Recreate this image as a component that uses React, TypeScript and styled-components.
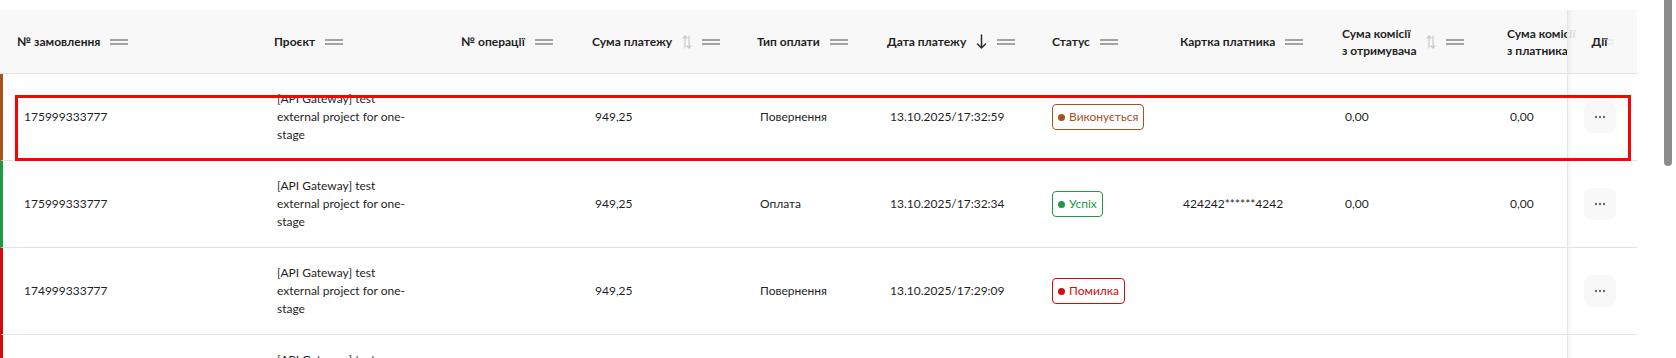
import React from "react";
import styled, { createGlobalStyle } from "styled-components";

type Tone = "progress" | "success" | "error";

interface Column {
  key: string;
  title: string[];
  width?: number;
  sort?: "both" | "down";
}

interface Payment {
  orderId: string;
  project: string;
  operationId: string;
  amount: string;
  type: string;
  date: string;
  status: { label: string; tone: Tone } | null;
  card: string;
  feeReceiver: string;
  feePayer: string;
  accent: Tone;
}

const tones: Record<Tone, string> = {
  progress: "#a5541c",
  success: "#1c9a45",
  error: "#d10a0a",
};

const columns: Column[] = [
  { key: "orderId", title: ["№ замовлення"], width: 258 },
  { key: "project", title: ["Проєкт"], width: 187 },
  { key: "operationId", title: ["№ операції"], width: 131 },
  { key: "amount", title: ["Сума платежу"], width: 165, sort: "both" },
  { key: "type", title: ["Тип оплати"], width: 130 },
  { key: "date", title: ["Дата платежу"], width: 165, sort: "down" },
  { key: "status", title: ["Статус"], width: 128 },
  { key: "card", title: ["Картка платника"], width: 162 },
  { key: "feeReceiver", title: ["Сума комісії", "з отримувача"], width: 165, sort: "both" },
  { key: "feePayer", title: ["Сума комісії", "з платника"], sort: "both" },
];

const PROJECT = "[API Gateway] test external project for one-stage";

const payments: Payment[] = [
  {
    orderId: "175999333777",
    project: PROJECT,
    operationId: "",
    amount: "949,25",
    type: "Повернення",
    date: "13.10.2025/17:32:59",
    status: { label: "Виконується", tone: "progress" },
    card: "",
    feeReceiver: "0,00",
    feePayer: "0,00",
    accent: "progress",
  },
  {
    orderId: "175999333777",
    project: PROJECT,
    operationId: "",
    amount: "949,25",
    type: "Оплата",
    date: "13.10.2025/17:32:34",
    status: { label: "Успіх", tone: "success" },
    card: "424242******4242",
    feeReceiver: "0,00",
    feePayer: "0,00",
    accent: "success",
  },
  {
    orderId: "174999333777",
    project: PROJECT,
    operationId: "",
    amount: "949,25",
    type: "Повернення",
    date: "13.10.2025/17:29:09",
    status: { label: "Помилка", tone: "error" },
    card: "",
    feeReceiver: "",
    feePayer: "",
    accent: "error",
  },
  // only the top of this row is in view
  {
    orderId: "",
    project: PROJECT,
    operationId: "",
    amount: "",
    type: "",
    date: "",
    status: null,
    card: "",
    feeReceiver: "",
    feePayer: "",
    accent: "error",
  },
];

const SortBoth = () => (
  <svg width="10" height="14" viewBox="0 0 10 14" fill="none" stroke="#c9c9c9" strokeWidth="1.2" strokeLinecap="round" strokeLinejoin="round">
    <path d="M3 13V1M1 3l2-2 2 2" />
    <path d="M7 1v12M5 11l2 2 2-2" />
  </svg>
);

const SortDown = () => (
  <svg width="11" height="15" viewBox="0 0 11 15" fill="none" stroke="#2a2a2a" strokeWidth="1.5" strokeLinecap="round" strokeLinejoin="round">
    <path d="M5.5 1v13M1.5 10l4 4 4-4" />
  </svg>
);

const DotsIcon = () => (
  <svg width="12" height="4" viewBox="0 0 12 4" fill="#6b6b6b">
    <circle cx="2" cy="2" r="1.2" />
    <circle cx="6" cy="2" r="1.2" />
    <circle cx="10" cy="2" r="1.2" />
  </svg>
);

const cellValue = (p: Payment, key: string) => {
  switch (key) {
    case "project":
      return <ProjectText>{p.project}</ProjectText>;
    case "status":
      if (!p.status) return null;
      return (
        <Badge $color={tones[p.status.tone]}>
          <BadgeDot $color={tones[p.status.tone]} />
          {p.status.label}
        </Badge>
      );
    default:
      return (p as any)[key];
  }
};

export default function App() {
  return (
    <>
      <GlobalStyle />
      <Page>
        <TableWrap>
          <HeaderRow>
            {columns.map((c, i) => (
              <HeadCell key={c.key} $width={c.width} $first={i === 0}>
                <HeadTitle>
                  {c.title.map((line) => (
                    <span key={line}>{line}</span>
                  ))}
                </HeadTitle>
                {c.sort === "both" && <SortBoth />}
                {c.sort === "down" && <SortDown />}
                <Handle />
              </HeadCell>
            ))}
            <StickyHead>
              <HeadTitle>
                <span>Дії</span>
              </HeadTitle>
            </StickyHead>
          </HeaderRow>

          {payments.map((p, idx) => (
            <Row key={idx} $accent={tones[p.accent]}>
              {columns.map((c, i) => (
                <Cell key={c.key} $width={c.width} $first={i === 0} $status={c.key === "status"}>
                  {cellValue(p, c.key)}
                </Cell>
              ))}
              <StickyCell>
                <ActionButton>
                  <DotsIcon />
                </ActionButton>
              </StickyCell>
            </Row>
          ))}
        </TableWrap>

        <ScrollTrack>
          <ScrollThumb />
        </ScrollTrack>

        {/* annotation frame around the first row */}
        <Highlight />
      </Page>
    </>
  );
}

const GlobalStyle = createGlobalStyle`
  body {
    margin: 0;
    background: #ffffff;
    font-family: Lato, "Liberation Sans", sans-serif;
    color: #1f1f1f;
  }
`;

const Page = styled.div`
  position: relative;
  display: flex;
  width: 1676px;
  height: 358px;
  overflow: hidden;
`;

const TableWrap = styled.div`
  width: 1637px;
  padding-top: 10px;
  display: flex;
  flex-direction: column;
  flex-shrink: 0;
`;

const HeaderRow = styled.div`
  display: flex;
  height: 64px;
  box-sizing: border-box;
  background: #f8f8f8;
  border-bottom: 1px solid #e2e2e2;
  flex-shrink: 0;
`;

const HeadCell = styled.div<{ $width?: number; $first?: boolean }>`
  display: flex;
  align-items: center;
  gap: 10px;
  box-sizing: border-box;
  padding-left: ${({ $first }) => ($first ? 17 : 16)}px;
  ${({ $width }) => ($width ? `width: ${$width}px; flex-shrink: 0;` : `flex: 1; min-width: 0;`)}
  white-space: nowrap;
`;

const HeadTitle = styled.div`
  display: flex;
  flex-direction: column;
  font-size: 12px;
  line-height: 17px;
  font-weight: 700;
  color: #1e1e1e;
`;

const Handle = styled.span`
  width: 18px;
  height: 6px;
  flex-shrink: 0;
  border-top: 2px solid #a3a3a3;
  border-bottom: 2px solid #a3a3a3;
  box-sizing: border-box;
`;

const StickyHead = styled.div`
  position: relative;
  z-index: 1;
  width: 70px;
  flex-shrink: 0;
  box-sizing: border-box;
  padding-right: 6px;
  display: flex;
  align-items: center;
  justify-content: center;
  background: rgba(248, 248, 248, 0.86);
  border-left: 1px solid #e4e4e4;
  box-shadow: inset 5px 0 5px -4px rgba(0, 0, 0, 0.07);
`;

const Row = styled.div<{ $accent: string }>`
  display: flex;
  height: 87px;
  flex-shrink: 0;
  box-sizing: border-box;
  border-left: 3px solid ${({ $accent }) => $accent};
  border-bottom: 1px solid #e4e4e4;
  font-size: 12px;
  line-height: 18px;
  color: #1f1f1f;
`;

const Cell = styled.div<{ $width?: number; $first?: boolean; $status?: boolean }>`
  display: flex;
  align-items: center;
  box-sizing: border-box;
  padding-left: ${({ $first, $status }) => ($first ? 21 : $status ? 13 : 16)}px;
  ${({ $width }) => ($width ? `width: ${$width}px; flex-shrink: 0;` : `flex: 1; min-width: 0;`)}
  white-space: nowrap;
`;

const ProjectText = styled.div`
  width: 138px;
  white-space: normal;
`;

const Badge = styled.span<{ $color: string }>`
  display: inline-flex;
  align-items: center;
  gap: 4px;
  height: 26px;
  box-sizing: border-box;
  padding: 0 5px;
  border: 1px solid ${({ $color }) => $color};
  border-radius: 4px;
  color: ${({ $color }) => $color};
  font-size: 12px;
`;

const BadgeDot = styled.span<{ $color: string }>`
  width: 7px;
  height: 7px;
  border-radius: 50%;
  background: ${({ $color }) => $color};
`;

const StickyCell = styled.div`
  position: relative;
  z-index: 1;
  width: 70px;
  flex-shrink: 0;
  box-sizing: border-box;
  padding-right: 6px;
  display: flex;
  align-items: center;
  justify-content: center;
  background: rgba(255, 255, 255, 0.9);
  border-left: 1px solid #e4e4e4;
  box-shadow: inset 5px 0 5px -4px rgba(0, 0, 0, 0.07);
`;

const ActionButton = styled.button`
  width: 32px;
  height: 32px;
  border: none;
  border-radius: 8px;
  background: #f8f8f8;
  display: flex;
  align-items: center;
  justify-content: center;
  padding: 0;
  cursor: pointer;
`;

const ScrollTrack = styled.div`
  margin-left: 27px;
  width: 8px;
  flex-shrink: 0;
`;

const ScrollThumb = styled.div`
  height: 170px;
  margin-top: -4px;
  border-radius: 4px;
  background: #8d8d8d;
`;

const Highlight = styled.div`
  position: absolute;
  z-index: 2;
  left: 15px;
  top: 95px;
  width: 1616px;
  height: 66px;
  box-sizing: border-box;
  border: 3px solid #ff0000;
  pointer-events: none;
`;
